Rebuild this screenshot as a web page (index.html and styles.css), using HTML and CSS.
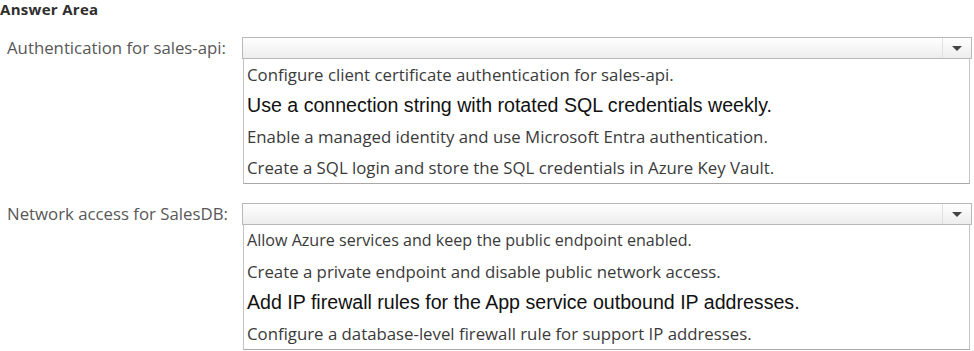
FILE: index.html
```html
<!DOCTYPE html>
<html lang="en">

<head>
	<meta charset="utf-8">
	<meta name="viewport" content="width=device-width, initial-scale=1">
	<title>Answer Area</title>
	<link rel="stylesheet" href="styles.css">
</head>

<body>
	<div class="area">
		<h1 class="title">Answer Area</h1>

		<div class="question">
			<div class="q-label">Authentication for sales-api:</div>
			<div class="dropdown">
				<div class="dropdown-head">
					<span class="arrow-box"><span class="arrow"></span></span>
				</div>
				<ul class="options">
					<li>Configure client certificate authentication for sales-api.</li>
					<li class="alt">Use a connection string with rotated SQL credentials weekly.</li>
					<li>Enable a managed identity and use Microsoft Entra authentication.</li>
					<li>Create a SQL login and store the SQL credentials in Azure Key Vault.</li>
				</ul>
			</div>
		</div>

		<div class="question second">
			<div class="q-label">Network access for SalesDB:</div>
			<div class="dropdown">
				<div class="dropdown-head">
					<span class="arrow-box"><span class="arrow"></span></span>
				</div>
				<ul class="options">
					<li class="md">Allow Azure services and keep the public endpoint enabled.</li>
					<li>Create a private endpoint and disable public network access.</li>
					<li class="alt">Add IP firewall rules for the App service outbound IP addresses.</li>
					<li>Configure a database-level firewall rule for support IP addresses.</li>
				</ul>
			</div>
		</div>
	</div>
</body>

</html>
```

FILE: styles.css
```css
* {
	box-sizing: border-box;
}

body {
	margin: 0;
	background-color: #ffffff;
	font-family: "Open Sans", "DejaVu Sans", sans-serif;
	color: #333333;
}

.area {
	padding: 0 2px 0 0;
}

.title {
	font-size: 15px;
	font-weight: 700;
	line-height: 18px;
	margin: 0;
	color: #2e2e2e;
	letter-spacing: 0.3px;
}

.question {
	display: grid;
	grid-template-columns: 242px 1fr;
	margin-top: 19px;
}

.question.second {
	margin-top: 19px;
}

.q-label {
	font-size: 16.8px;
	color: #575757;
	padding-left: 7px;
	line-height: 22px;
}

.dropdown-head {
	height: 22px;
	border: 1px solid #b8b8b8;
	background: linear-gradient(#ffffff, #ededed);
	display: flex;
	justify-content: flex-end;
}

.arrow-box {
	width: 29px;
	border-left: 1px solid #e0e0e0;
	display: flex;
	align-items: center;
	justify-content: center;
}

.arrow {
	width: 0;
	height: 0;
	border-left: 5px solid transparent;
	border-right: 5px solid transparent;
	border-top: 5px solid #444444;
}

.options {
	list-style: none;
	margin: 0 2px 0 1px;
	padding: 0;
	border: 1px solid #c4c4c4;
	border-top: none;
	border-bottom-color: #a8a8a8;
}

.options li {
	height: 31px;
	line-height: 31px;
	padding-left: 3px;
	font-size: 16.8px;
	color: #3a3a3a;
	white-space: nowrap;
}

.options li.md {
	font-size: 16.1px;
}

.options li.alt {
	font-family: "Liberation Sans", Arial, sans-serif;
	font-size: 19.6px;
	color: #111111;
}
```
